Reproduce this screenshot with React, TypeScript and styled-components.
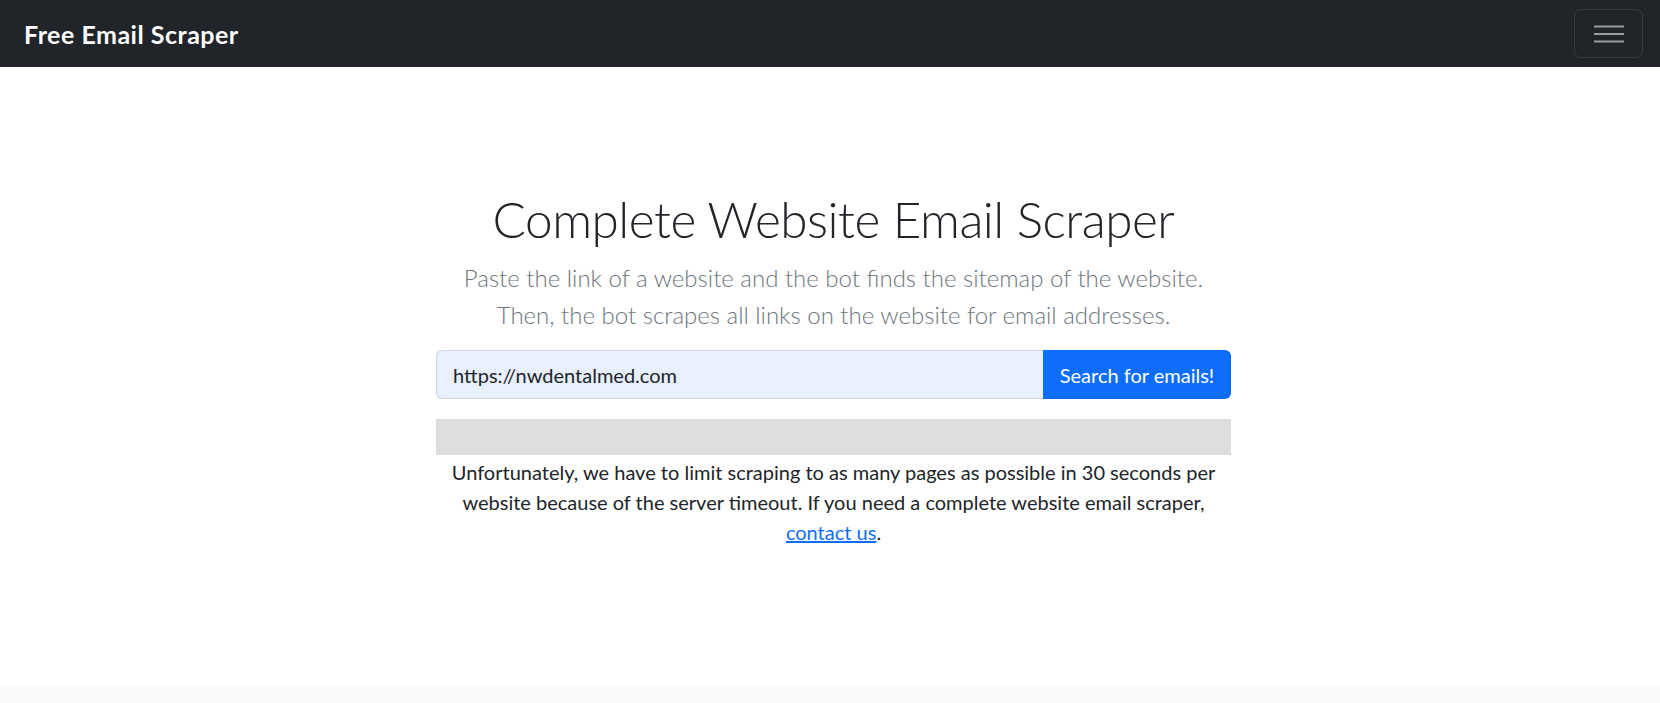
import React from "react";
import styled, { createGlobalStyle } from "styled-components";

const GlobalStyle = createGlobalStyle`
  html, body {
    margin: 0;
    padding: 0;
    background: #ffffff;
    font-family: Lato, "Open Sans", "Liberation Sans", sans-serif;
    color: #212529;
  }
  * {
    box-sizing: border-box;
  }
`;

const Page = styled.div`
  display: flex;
  flex-direction: column;
  min-height: 703px;
`;

const Navbar = styled.nav`
  height: 67px;
  background: #212529;
  display: flex;
  align-items: center;
  justify-content: space-between;
  padding: 0 17px 0 24px;
`;

const Brand = styled.a`
  color: #ffffff;
  font-size: 25px;
  font-weight: 700;
  letter-spacing: 0.5px;
  text-decoration: none;
`;

const Toggler = styled.button`
  width: 69px;
  height: 49px;
  background: transparent;
  border: 1px solid rgba(255, 255, 255, 0.1);
  border-radius: 7px;
  display: flex;
  align-items: center;
  justify-content: center;
  padding: 0;
  cursor: pointer;
`;

const Main = styled.main`
  height: 619px;
  display: flex;
  flex-direction: column;
  align-items: center;
  padding: 118px 0 0 7px;
`;

const Column = styled.div`
  width: 795px;
  display: flex;
  flex-direction: column;
  align-items: stretch;
  text-align: center;
`;

const Title = styled.h1`
  margin: 0 -60px 5px;
  font-size: 49.5px;
  font-weight: 300;
  line-height: 69px;
  letter-spacing: -0.5px;
  color: #212529;
  white-space: nowrap;
`;

const Lead = styled.p`
  margin: 0 -40px 17px;
  font-size: 24px;
  font-weight: 300;
  line-height: 37px;
  color: #6c757d;
`;

const InputGroup = styled.form`
  display: flex;
  height: 49px;
`;

const UrlInput = styled.input`
  flex: 1;
  min-width: 0;
  height: 100%;
  border: 1px solid #ced4da;
  border-right: none;
  border-radius: 6px 0 0 6px;
  background: #e8f0fe;
  padding: 0 16px;
  font-family: inherit;
  font-size: 20px;
  color: #212529;
  outline: none;
`;

const SearchButton = styled.button`
  width: 188px;
  height: 100%;
  border: none;
  border-radius: 0 6px 6px 0;
  background: #0d6efd;
  color: #ffffff;
  font-family: inherit;
  font-size: 20px;
  cursor: pointer;
  padding: 0;
`;

const Progress = styled.div`
  height: 36px;
  margin-top: 20px;
  background: #dddddd;
`;

const Note = styled.p`
  margin: 2px 0 0;
  padding: 0 14px;
  font-size: 20px;
  line-height: 30px;
  color: #212529;
`;

const Link = styled.a`
  color: #0d6efd;
  text-decoration: underline;
`;

const Footer = styled.footer`
  flex: 1;
  background: #f8f9fa;
`;

const App: React.FC = () => {
  return (
    <Page>
      <GlobalStyle />
      <Navbar>
        <Brand href="#">Free Email Scraper</Brand>
        <Toggler aria-label="Toggle navigation">
          <svg width="30" height="30" viewBox="0 0 30 30">
            <path
              d="M0 7.5h30M0 15h30M0 22.5h30"
              stroke="rgba(255,255,255,0.55)"
              strokeWidth="2"
            />
          </svg>
        </Toggler>
      </Navbar>
      <Main>
        <Column>
          <Title>Complete Website Email Scraper</Title>
          <Lead>
            Paste the link of a website and the bot finds the sitemap of the website.
            <br />
            Then, the bot scrapes all links on the website for email addresses.
          </Lead>
          <InputGroup onSubmit={(e) => e.preventDefault()}>
            <UrlInput type="text" defaultValue="https://nwdentalmed.com" />
            <SearchButton type="submit">Search for emails!</SearchButton>
          </InputGroup>
          <Progress />
          <Note>
            Unfortunately, we have to limit scraping to as many pages as possible in 30 seconds per
            website because of the server timeout. If you need a complete website email scraper,{" "}
            <Link href="#">contact us</Link>.
          </Note>
        </Column>
      </Main>
      <Footer />
    </Page>
  );
};

export default App;
